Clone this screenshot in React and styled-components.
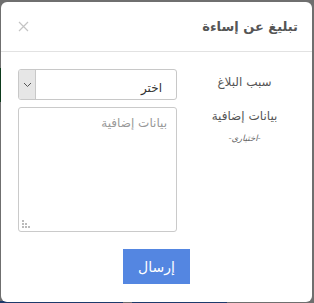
import React from "react";
import styled, { createGlobalStyle } from "styled-components";

const Global = createGlobalStyle`
  html, body { margin: 0; padding: 0; }
  body {
    width: 314px; height: 303px; overflow: hidden;
    background: #6f6f6f;
    font-family: "DejaVu Sans", "Noto Sans", sans-serif;
  }
`;

const Backdrop = styled.div`
  position: relative;
  width: 314px;
  height: 303px;
  padding: 2px 1px 1px 1px;
  box-sizing: border-box;
`;

const Strip = styled.div`
  position: absolute;
  background: ${(p) => p.$c};
  left: ${(p) => p.$x}px;
  top: ${(p) => p.$y}px;
  width: ${(p) => p.$w}px;
  height: ${(p) => p.$h}px;
`;

const Modal = styled.div`
  position: relative;
  direction: rtl;
  background: #fff;
  border-radius: 6px;
  height: 300px;
  width: 311px;
  display: flex;
  flex-direction: column;
`;

const Header = styled.div`
  height: 49px;
  border-bottom: 1px solid #e2e2e2;
  display: flex;
  align-items: center;
  justify-content: space-between;
  padding: 0 14px 0 16px;
`;

const Title = styled.h4`
  margin: 0;
  font-size: 13px;
  font-weight: bold;
  color: #555;
`;

const Close = styled.button`
  border: 0;
  background: none;
  padding: 0;
  width: 12px;
  height: 12px;
  display: flex;
  cursor: pointer;
`;

const Body = styled.div`
  padding: 17px 0 0 17px;
  display: grid;
  grid-template-columns: 135px 159px;
  row-gap: 7px;
  align-items: start;
`;

const Label = styled.div`
  text-align: center;
  color: #555;
  font-size: 12px;
  padding-top: ${(p) => p.$pt || 0}px;
  line-height: 16px;
`;

const Hint = styled.div`
  font-size: 8.5px;
  font-style: italic;
  color: #666;
  margin-top: 6px;
`;

const SelectBox = styled.div`
  height: 31px;
  box-sizing: border-box;
  border: 1px solid #c8c8c8;
  border-radius: 3px;
  display: flex;
  align-items: center;
  overflow: hidden;
  font-size: 12px;
  color: #333;
`;

const SelectText = styled.span`
  flex: 1;
  padding-right: 14px;
  padding-top: 6px;
`;

const Arrow = styled.span`
  width: 16px;
  height: 100%;
  background: #e6e6e6;
  border-right: 1px solid #c8c8c8;
  display: flex;
  align-items: center;
  justify-content: center;
`;

const TextArea = styled.div`
  position: relative;
  height: 125px;
  box-sizing: border-box;
  border: 1px solid #cacaca;
  border-radius: 3px;
  padding: 8px 9px;
  font-size: 12px;
  color: #999;
`;

const Grip = styled.svg`
  position: absolute;
  left: 3px;
  bottom: 3px;
`;

const Footer = styled.div`
  display: flex;
  justify-content: center;
  padding: 17px 0 0 0;
`;

const SendBtn = styled.button`
  width: 67px;
  height: 35px;
  border: 0;
  background: #5486e1;
  color: #fff;
  font-family: "DejaVu Sans", sans-serif;
  font-size: 14px;
  padding: 0;
`;

export default function App() {
  return (
    <>
      <Global />
      <Backdrop>
        <Strip $c="#0d3a1c" $x={0} $y={68} $w={2} $h={34} />
        <Strip $c="#1d3a6b" $x={0} $y={301} $w={123} $h={2} />
        <Strip $c="#1d3a6b" $x={132} $y={301} $w={95} $h={2} />
        <Modal>
          <Header>
            <Title>تبليغ عن إساءة</Title>
            <Close aria-label="close">
              <svg width="11" height="11" viewBox="0 0 11 11">
                <path d="M1 1L10 10M10 1L1 10" stroke="#c4c4c4" strokeWidth="1.2" />
              </svg>
            </Close>
          </Header>
          <Body>
            <Label $pt={5}>سبب البلاغ</Label>
            <SelectBox>
              <SelectText>اختر</SelectText>
              <Arrow>
                <svg width="9" height="6" viewBox="0 0 9 6">
                  <path d="M1 1L4.5 4.5L8 1" stroke="#555" strokeWidth="1" fill="none" />
                </svg>
              </Arrow>
            </SelectBox>
            <Label $pt={1}>
              بيانات إضافية
              <Hint>-اختياري-</Hint>
            </Label>
            <TextArea>
              بيانات إضافية
              <Grip width="8" height="8" viewBox="0 0 8 8">
                <rect x="0" y="0" width="2" height="2" fill="#bbb" />
                <rect x="0" y="3" width="2" height="2" fill="#bbb" />
                <rect x="3" y="3" width="2" height="2" fill="#bbb" />
                <rect x="0" y="6" width="2" height="2" fill="#bbb" />
                <rect x="3" y="6" width="2" height="2" fill="#bbb" />
                <rect x="6" y="6" width="2" height="2" fill="#bbb" />
              </Grip>
            </TextArea>
          </Body>
          <Footer>
            <SendBtn>إرسال</SendBtn>
          </Footer>
        </Modal>
      </Backdrop>
    </>
  );
}
